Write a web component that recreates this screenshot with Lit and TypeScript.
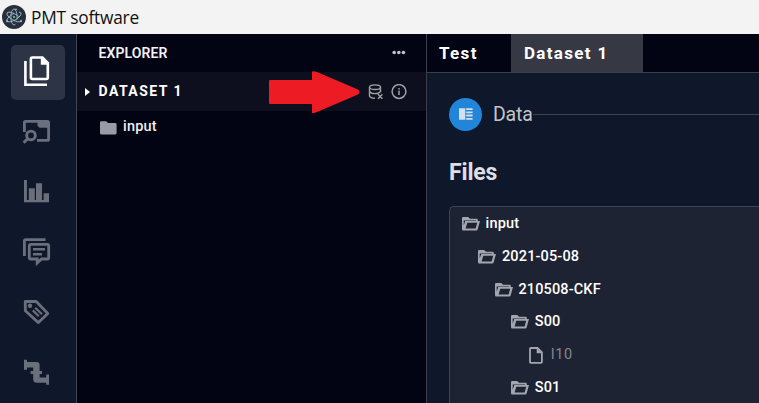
import { LitElement, html, css, svg } from "lit";
import { customElement, property } from "lit/decorators.js";

const navIcons = [
  svg`<path d="M14.4 16V39.7H36" stroke-width="2.6"/><path d="M20.4 12.5H31.5L36.8 18V32.6Q36.8 34 35.4 34H21.4Q19.9 34 19.9 32.6V13.6Q19.9 12.5 21 12.5Z" stroke-width="2.6"/><path d="M29.8 12V19.8H38V18L32 12Z" fill="currentColor" stroke="none"/>`,
  svg`<path d="M13.4 27V17.5Q13.4 16.4 14.6 16.4H36.4Q37.6 16.4 37.6 17.5V34.2Q37.6 35.4 36.4 35.4H26" stroke-width="2.8"/><path d="M26.5 16H38V22.7H28.5L26.5 20.7Z" fill="currentColor" stroke="none"/><circle cx="20" cy="30.4" r="4.3" stroke-width="2.9"/><path d="M16.8 33.6L12.6 37.8" stroke-width="3"/>`,
  svg`<path d="M13 15H15.9V35H17.8V23.2H23.8V35H25V18.2H31V35H32.6V28.2H38V37.2H13Z" fill="currentColor" stroke="none"/>`,
  svg`<path d="M13.4 31V15.8Q13.4 14.7 14.6 14.7H34.5" stroke-width="2.8"/><path d="M19.5 19.3H36.2Q37.7 19.3 37.7 20.8V32.4Q37.7 34 36.2 34H30.5L26.2 38V34H19.8Q18.3 34 18.3 32.4V20.8Q18.3 19.3 19.8 19.3Z" stroke-width="2.8"/><path d="M22 24.3H34M22 29.3H31" stroke-width="2.4"/>`,
  svg`<path d="M14.3 16.5H25.2L36.8 28.4L27.4 37.6L14.3 25.7Z" stroke-width="2.8" stroke-linejoin="round"/><circle cx="19" cy="20.8" r="2.2" fill="currentColor" stroke="none"/><path d="M24.2 22.8L31 29.2M21.8 25.4L27.8 31.2" stroke-width="2.2"/>`,
  svg`<path d="M13 14.8H16V17H25.6Q28.6 17 28.6 20V26H31V29H28.6V32.6H35.2V29.6H38V39.8H35.2V37.8H25.8Q22.2 37.8 22.2 34.2V29H19.6V26H22.2V22.6H16V24.8H13Z" fill="currentColor" stroke="none"/>`,
];

const folderOpen = html`<svg class="ico" width="18" height="14" viewBox="0 0 18 14"><path fill="currentColor" fill-rule="evenodd" d="M1.2 0H6.2L8 1.8H14.6Q15.8 1.8 15.8 3V4H18L15.6 12.4Q15.3 13.4 14.2 13.4H1.2Q0 13.4 0 12.2V1.2Q0 0 1.2 0ZM1.7 3.4V8.6L3.3 4H14V3.4ZM5.3 5.8L3.6 11.5H13.6L15.2 5.8Z"/></svg>`;
const folder = html`<svg class="ico" width="17" height="14" viewBox="0 0 17 14"><path fill="currentColor" d="M1.3 .3H6.3L8 2H15.3Q16.6 2 16.6 3.3V12.1Q16.6 13.4 15.3 13.4H1.3Q0 13.4 0 12.1V1.6Q0 .3 1.3 .3Z"/></svg>`;
const file = html`<svg class="ico file" width="14" height="17" viewBox="0 0 14 17"><path d="M1.9 1H8.5L12.9 5.4V15Q12.9 15.9 12 15.9H1.9Q1 15.9 1 15V1.9Q1 1 1.9 1Z" fill="none" stroke="currentColor" stroke-width="1.8"/><path d="M7.7 1V6.2H13Z" fill="currentColor"/></svg>`;

@customElement("tree-row")
export class TreeRow extends LitElement {
  @property() label = "";
  @property() kind = "open";
  @property({ type: Number }) depth = 0;
  static styles = css`
    :host { display: block; height: 32.7px; }
    .row { display: flex; align-items: center; height: 100%; color: #fff; font: 500 14.5px/20px Roboto, sans-serif; letter-spacing: .14px; }
    .ico { color: #a3a5af; margin: 0 5.6px 0 0; flex: none; }
    .file { margin: 0 7.6px 0 1.6px; }
    .dim { color: #85868c; font-weight: 400; letter-spacing: .6px; padding-bottom: 1px; }
  `;
  render() {
    const leaf = this.kind === "file";
    return html`<div class="row" style="padding-left:${12 + this.depth * 16.4}px">
      ${leaf ? file : folderOpen}<span class=${leaf ? "dim" : ""}>${this.label}</span>
    </div>`;
  }
}

@customElement("app-root")
export class AppRoot extends LitElement {
  static styles = css`
    :host { display: flex; flex-direction: column; width: 759px; height: 403px; overflow: hidden; font-family: Roboto, sans-serif; background: #0f172a; color: #fff; }
    * { box-sizing: border-box; }
    svg { display: block; flex: none; }
    .title { height: 34px; flex: none; background: #f3f3f3; color: #111; display: flex; align-items: center; gap: 5px; padding-left: 2px; font: 17.3px/34px "Open Sans", sans-serif; }
    .title span { letter-spacing: -.2px; padding-top: 1px; }
    .body { display: flex; flex: 1; min-height: 0; }
    .nav { width: 77px; flex: none; border-right: 1px solid #414654; padding: 11px 0 0 11px; display: flex; flex-direction: column; gap: 6px; }
    .item { width: 54px; height: 54px; flex: none; border-radius: 5px; color: #6b6f7c; }
    .item.on { background: #2d3446; color: #fff; height: 55px; margin-bottom: -1px; }
    .explorer { width: 350px; flex: none; background: #020414; border-right: 1px solid #3b3d49; }
    .head { height: 38px; display: flex; align-items: center; justify-content: space-between; padding: 0 20px 0 21.5px; font: 600 14px/20px Roboto, sans-serif; color: #f2f2f4; letter-spacing: .1px; }
    .set { position: relative; height: 39px; background: #0d0f1e; display: flex; align-items: center; padding: 0 19px 0 8px; font: 700 14px/20px Roboto, sans-serif; letter-spacing: 1.45px; }
    .set .name { margin-left: 8.5px; flex: 1; padding-bottom: 1px; }
    .tools { display: flex; gap: 7px; color: #a0a0a3; }
    .arrow { position: absolute; left: 192px; top: -1px; }
    .leaf { display: flex; align-items: center; height: 32px; padding-left: 23px; color: #eee; font: 500 14.5px/20px Roboto, sans-serif; letter-spacing: .18px; }
    .leaf .ico { color: #9b9ba3; margin: 2px 6px 0 0; }
    .main { flex: 1; min-width: 0; }
    .tabs { height: 39px; background: #020414; border-bottom: 1px solid #3b3f4c; display: flex; font: 700 17px/38px Roboto, sans-serif; letter-spacing: 1.32px; }
    .tab { width: 84px; padding-left: 12px; }
    .tab.on { width: 132px; padding-left: 13px; background: #363944; }
    .section { display: flex; align-items: center; height: 34px; margin: 24px 0 0 22px; color: #c3c5cb; font: 400 19.5px/32px Roboto, sans-serif; letter-spacing: -.2px; }
    .section span { padding-top: 2px; }
    .disc { width: 33px; height: 33px; border-radius: 50%; background: #2185d9; margin-right: 11px; display: flex; align-items: center; justify-content: center; flex: none; }
    .rule { height: 1px; flex: 1; background: #3d4351; }
    .files { margin: 26px 0 0 22px; font: 700 23px/32px Roboto, sans-serif; color: #dedfe2; letter-spacing: -.15px; }
    .panel { margin: 17px 0 0 22px; padding-top: 1px; height: 240px; border: 1px solid #3e4453; border-right: 0; border-radius: 5px 0 0 0; background: #1e2334; }
  `;
  render() {
    return html`
      <div class="title">
        <svg width="24" height="28" viewBox="0 0 24 28" fill="none" stroke="#8fc6cd" stroke-width=".85">
          <circle cx="12" cy="14" r="12" fill="#2b2e3a" stroke="none"/>
          <ellipse cx="12" cy="14" rx="8" ry="3.1" transform="rotate(30 12 14)" stroke-dasharray="31 4"/>
          <ellipse cx="12" cy="14" rx="8" ry="3.1" transform="rotate(-30 12 14)" stroke-dasharray="29 5"/>
          <ellipse cx="12" cy="14" rx="8" ry="3.1" transform="rotate(90 12 14)" stroke-dasharray="30 4"/>
          <g fill="#8fc6cd" stroke="none"><circle cx="12" cy="14" r="1"/><circle cx="5" cy="18.2" r="1"/><circle cx="19" cy="18.2" r="1"/><circle cx="14" cy="6.3" r=".9"/></g>
        </svg>
        <span>PMT software</span>
      </div>
      <div class="body">
        <div class="nav">
          ${navIcons.map((icon, i) => html`<div class="item ${i === 0 ? "on" : ""}">
            <svg width="54" height="54" viewBox="0 0 54 54" fill="none" stroke="currentColor">${icon}</svg>
          </div>`)}
        </div>
        <div class="explorer">
          <div class="head"><span>EXPLORER</span>
            <svg width="14" height="6" viewBox="0 0 14 6" fill="#c3c4c9"><circle cx="2.2" cy="2.5" r="1.8"/><circle cx="6.8" cy="2.5" r="1.8"/><circle cx="11.4" cy="2.5" r="1.8"/></svg>
          </div>
          <div class="set">
            <svg width="5" height="8" viewBox="0 0 5 8"><path d="M0 0L5 4L0 8Z" fill="#fff"/></svg>
            <span class="name">DATASET 1</span>
            <div class="tools">
              <svg width="16" height="16" viewBox="0 0 16 16" fill="none" stroke="currentColor" stroke-width="1.4"><ellipse cx="7" cy="3.2" rx="5.5" ry="2.3"/><path d="M1.5 3.2V12Q2.5 14.2 7 14.2M12.5 3.2V8.2M1.5 7.4Q2.8 9.6 7 9.6T12.5 7.4M10 10.3L14.4 14.7M14.4 10.3L10 14.7"/></svg>
              <svg width="16" height="16" viewBox="0 0 16 16" fill="none" stroke="currentColor" stroke-width="1.5"><circle cx="8" cy="7.5" r="6.9"/><path d="M8 6.4V11M8 3.9V5.4"/></svg>
            </div>
            <svg class="arrow" width="92" height="43" viewBox="0 0 92 43"><path d="M1 9H43V1Q43 0 45 .2L48 1L89 18.5Q92 21 89 23.5L48 41L45 42H43V33H1Q0 33 0 32V10Q0 9 1 9Z" fill="#ed1c24"/></svg>
          </div>
          <div class="leaf">${folder}<span>input</span></div>
        </div>
        <div class="main">
          <div class="tabs"><div class="tab">Test</div><div class="tab on">Dataset 1</div></div>
          <div class="section">
            <div class="disc"><svg width="14" height="12" viewBox="0 0 14 12" fill="#d3dfea"><path d="M0 .3H6.3V11.7H0ZM7.2 .3H13.6V2.1H7.2ZM7.2 3.4H13.6V5.2H7.2ZM7.2 6.6H13.6V8.4H7.2ZM7.2 9.9H13.6V11.7H7.2Z"/></svg></div>
            <span>Data</span><div class="rule"></div>
          </div>
          <div class="files">Files</div>
          <div class="panel">
            <tree-row label="input"></tree-row>
            <tree-row label="2021-05-08" .depth=${1}></tree-row>
            <tree-row label="210508-CKF" .depth=${2}></tree-row>
            <tree-row label="S00" .depth=${3}></tree-row>
            <tree-row label="I10" kind="file" .depth=${4}></tree-row>
            <tree-row label="S01" .depth=${3}></tree-row>
          </div>
        </div>
      </div>`;
  }
}
